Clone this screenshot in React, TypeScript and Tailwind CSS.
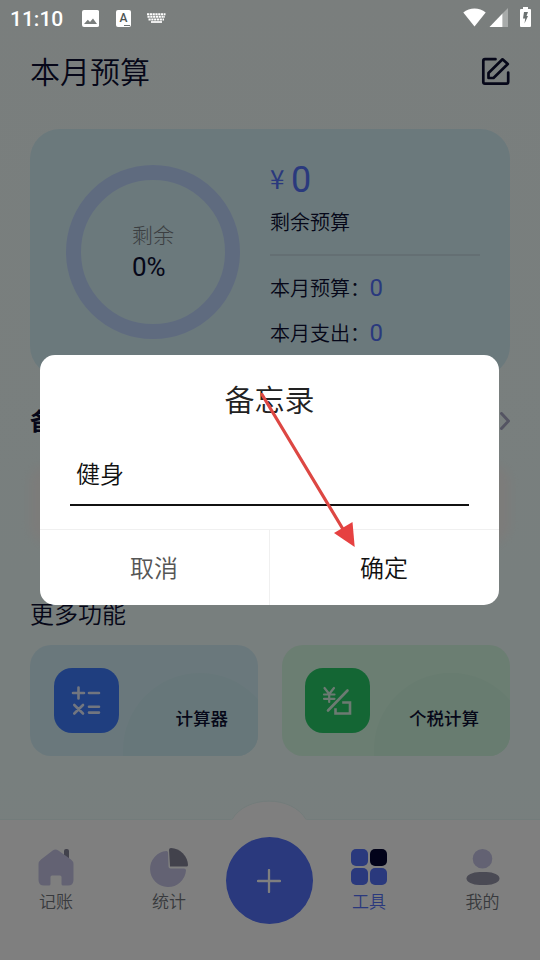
import React from "react";

const tools = [
    { label: '计算器', card: 'bg-[#d5f1f9]', blob: 'bg-[#cfeff4] -right-[19px] top-[28px]', tile: 'bg-[#3f7cff]', pad: 'pl-[24px] pr-[30px]', icon: 'calc' },
    { label: '个税计算', card: 'bg-[#d6fce4]', blob: 'bg-[#d0f8e0] -right-[18px] top-[28px]', tile: 'bg-[#28cc69]', pad: 'pl-[23px] pr-[31px]', icon: 'tax' },
];

function StatusBar() {
    return (
        <div className="absolute inset-x-0 top-0 z-20 flex h-9 items-center pl-[10px] pr-[9px] text-white">
            <span className="w-[53px] whitespace-nowrap pt-[2px] text-[21px] font-medium leading-none">11:10</span>
            <svg className="ml-[19px]" width="17" height="17" viewBox="0 0 17 17">
                <path fill="#fff" fillRule="evenodd" d="M2 0h13.200a2 2 0 0 1 2 2v13a2 2 0 0 1-2 2H2a2 2 0 0 1-2-2V2a2 2 0 0 1 2-2Zm0 14h13l-4-5.500-3 3.500-2.200-2.200Z" />
            </svg>
            <div className="relative ml-[17px] flex h-[17px] w-[15px] items-center justify-center rounded-[2px] bg-white pb-px text-[12px] font-medium leading-none text-[#4d5353]">
                A
                <span className="absolute bottom-[1px] right-[1px] w-[6px] border-b border-dashed border-[#6b7171]" />
            </div>
            <svg className="ml-[16px]" width="19" height="11" viewBox="0 0 19 11">
                <g stroke="#fff" strokeWidth="2" strokeDasharray="2.200 0.600">
                    <path d="M0 1.200H18.500" />
                    <path d="M0.500 3.800H18" />
                    <path d="M1.500 6.400H17" />
                </g>
                <path d="M4 9H15" stroke="#fff" strokeWidth="1.700" />
            </svg>
            <div className="ml-auto flex items-center">
                <svg className="-mt-[2px]" width="23" height="19" viewBox="0 0 23 19">
                    <path fill="#fff" d="M0.300 4.500C6.500-0.700 16.500-0.700 22.700 4.500L11.500 18.500Z" />
                </svg>
                <svg className="-mt-[1px] ml-[3px]" width="19" height="19" viewBox="0 0 19 19">
                    <path fill="#fff" fillOpacity="0.350" d="M13.500 5.500 19 0V19H13.500Z" />
                    <path fill="#fff" d="M0.500 19 13.500 5.500V19Z" />
                </svg>
                <svg className="-mt-[2px] ml-[12px]" width="11" height="20" viewBox="0 0 11 20">
                    <path fill="#fff" d="M3 0H8V2H10a1 1 0 0 1 1 1V19a1 1 0 0 1-1 1H1a1 1 0 0 1-1-1V3a1 1 0 0 1 1-1H3Z" />
                    <path fill="#6b7171" d="M4 5H8L6.500 9H8L4.500 16.500 5.200 11.500H3Z" />
                </svg>
            </div>
        </div>
    );
}

function BudgetCard() {
    return (
        <section className="flex h-[247px] rounded-[30px] bg-[#d6f2f9]">
            <div className="ml-[36px] mt-[36px] h-[174px] w-[174px] rounded-full border-[15px] border-[#bfd6ff] pl-[51px] pt-[43px]">
                <p className="text-[21px] font-light leading-[26px] text-[#787e83]">剩余</p>
                <p className="mt-[2px] text-[26px] font-normal leading-[32px] text-[#0c0f32]">0%</p>
            </div>
            <div className="ml-[30px] w-[210px] pt-[30px] text-[#0c0f32]">
                <div className="flex h-[42px] items-center font-normal text-[#5472fb]">
                    <span className="-mt-[5px] w-[21px] font-['Noto_Sans_CJK_SC',sans-serif] text-[26px]">¥</span>
                    <span className="-mt-px text-[36px]">0</span>
                </div>
                <p className="mt-[9px] text-[20px] leading-[26px]">剩余预算</p>
                <div className="mt-[18px] h-[2px] bg-[#c9dfe6]" />
                <div className="mt-[18px] flex h-[30px] items-center text-[20px]">
                    <span className="w-[99.500px] whitespace-nowrap">本月预算：</span>
                    <span className="-mt-[3px] text-[24px] font-normal text-[#5472fb]">0</span>
                </div>
                <div className="mt-[15px] flex h-[30px] items-center text-[20px]">
                    <span className="w-[99.500px] whitespace-nowrap">本月支出：</span>
                    <span className="-mt-[3px] text-[24px] font-normal text-[#5472fb]">0</span>
                </div>
            </div>
        </section>
    );
}

function ToolIcon({ name }: { name: string }) {
    if (name === 'calc') {
        return (
            <svg width="65" height="65" viewBox="0.500 0 65 65" fill="none" stroke="#e4edff" strokeWidth="2.600" strokeLinecap="round">
                <path d="M25 19.500V30.500M19.500 25H30.500M35.500 25H45.500" />
                <path d="M20.800 37 29.500 45.500M29.500 37 20.800 45.500M35.500 38.800H45.500M35.500 44.600H45.500" />
            </svg>
        );
    }
    return (
        <svg width="65" height="65" viewBox="0 0 65 65" fill="none" stroke="#d9f5e4" strokeWidth="2.600" strokeLinecap="round" strokeLinejoin="round">
            <path d="M19.500 20 24.200 26 29 20M24.200 26V34M19 26.500H29.500M19 30.800H29.500" strokeWidth="2.200" />
            <path d="M42.500 22.500 23 42.500" />
            <path d="M38.500 34.500H45V45.500H30.500V41.500" strokeLinecap="square" strokeLinejoin="miter" />
        </svg>
    );
}

function TabBar() {
    return (
        <nav className="relative h-[141px] border-t border-[#e6f8f6] bg-white">
            <svg className="absolute -top-[20px] left-[222px]" width="94" height="22" viewBox="0 0 94 22">
                <path d="M0 22 10 19.500C24-5 70-5 84 19.500L94 22Z" fill="#fff" />
                <path d="M10 19.500C24-5 70-5 84 19.500" fill="none" stroke="#e6f8f6" />
            </svg>
            <div className="relative flex text-center text-[17px] leading-[24px] text-[#70747b]">
                <a className="flex w-[112px] flex-col items-center pt-[28px] font-[350]">
                    <svg width="38" height="40" viewBox="0 0 38 40">
                        <rect x="27" y="1" width="5" height="12" rx="2" fill="#858599" />
                        <path fill="#c6c5e6" d="M15.700 2.500Q18.500 0.500 21.300 2.500L34 11.500Q36.500 13.500 36.500 16V32Q36.500 37.500 31 37.500H26Q24.500 37.500 24.500 36V29Q24.500 27.500 23 27.500H15Q13.500 27.500 13.500 29V36Q13.500 37.500 12 37.500H7Q1.500 37.500 1.500 32V16Q1.500 13.500 4 11.500Z" />
                    </svg>
                    <span className="mt-[2px]">记账</span>
                </a>
                <a className="flex w-[114px] flex-col items-center pt-[28px] font-[350]">
                    <svg width="38" height="40" viewBox="0 0 38 40">
                        <path fill="#c6c5e6" d="M16.500 3A18 18 0 1 0 36 22.500Q36 20.500 34 20.500H20.500Q18.500 20.500 18.500 18.500L18 4.500Q18 3 16.500 3Z" />
                        <path fill="#858599" d="M19 2Q19 0 21 0A18 18 0 0 1 38 17Q38 18.500 36.500 18.500H20Z" />
                    </svg>
                    <span className="mt-[2px]">统计</span>
                </a>
                <a className="flex w-[86px] justify-center pt-[17px]">
                    <span className="flex h-[87px] w-[87px] shrink-0 items-center justify-center rounded-full bg-[#5472fb]">
                        <svg width="24" height="24" viewBox="0 0 24 24" stroke="#fff" strokeWidth="2.300" strokeLinecap="round">
                            <path d="M12 1V23M1 12H23" />
                        </svg>
                    </span>
                </a>
                <a className="flex w-[114px] flex-col items-center pt-[29px] font-[350] text-[#5472fb]">
                    <svg width="36" height="36" viewBox="0 0 36 36" fill="#5472fb">
                        <rect width="17" height="17" rx="5" />
                        <rect x="19" width="17" height="17" rx="5" fill="#050734" />
                        <rect y="19" width="17" height="17" rx="5" />
                        <rect x="19" y="19" width="17" height="17" rx="5" />
                    </svg>
                    <span className="mt-[5px]">工具</span>
                </a>
                <a className="flex w-[113px] flex-col items-center pt-[29px] font-[350]">
                    <svg width="34" height="36" viewBox="0 0 34 36">
                        <circle cx="16.500" cy="9.800" r="9.800" fill="#c6c5e6" />
                        <rect x="0.500" y="23" width="33" height="13" rx="13" ry="6.500" fill="#9595a8" />
                    </svg>
                    <span className="mt-[5px]">我的</span>
                </a>
            </div>
        </nav>
    );
}

function MemoDialog() {
    return (
        <div className="absolute inset-0 z-10 bg-black/50 pl-[40px] pt-[355px]">
            <div className="flex h-[250px] w-[459px] flex-col rounded-[15px] bg-white">
                <h2 className="pt-[26px] text-center text-[30px] font-[350] leading-[40px] text-[#222]">备忘录</h2>
                <div className="mx-[30px] mt-[35px] h-[50px] border-b-2 border-[#111] pl-[6px] pt-px text-[24px] font-[350] leading-[36px] text-[#111]">健身</div>
                <div className="mt-auto flex h-[76px] border-t border-[#f0f0f0] text-[24px] font-[350] leading-[79px]">
                    <button className="w-[230px] border-r border-[#f0f0f0] pr-px text-[#555]">取消</button>
                    <button className="flex-1 pr-px text-[#111]">确定</button>
                </div>
            </div>
            <svg className="pointer-events-none absolute left-0 top-0" width="540" height="960" viewBox="0 0 540 960">
                <path d="M262 394.500 343.500 530" stroke="#dd4743" strokeWidth="3.200" strokeLinecap="round" />
                <path d="M354.700 547 334 533 352.500 522Z" fill="#e64141" />
            </svg>
        </div>
    );
}

export default function App() {
    return (
        <div className="relative flex h-[960px] w-[540px] flex-col overflow-hidden bg-gradient-to-b from-[#f4fdfb] to-[#effffd] font-['Roboto','Noto_Sans_CJK_SC',sans-serif]" lang="zh-CN">
            <StatusBar />
            <main className="flex-1 px-[30px] font-[350] text-[#0c0f32]">
                <header className="flex h-[129px] items-start justify-between pt-[51px]">
                    <h1 className="text-[30px] leading-[44px]">本月预算</h1>
                    <svg className="mt-[6px]" width="29" height="29" viewBox="0 0 29 29" fill="none" stroke="#0c0f32" strokeWidth="2.700" strokeLinecap="round" strokeLinejoin="round">
                        <path d="M14.500 2.200H4Q2.300 2.200 2.300 4V25Q2.300 26.700 4 26.700H25.500Q27.200 26.700 27.200 25V15.500" />
                        <path d="M7.500 20.500V16L21.500 2.300 26.800 7 12.500 21H7.500Z" />
                    </svg>
                </header>
                <BudgetCard />
                <div className="mt-[28px] flex h-[36px] items-center justify-between">
                    <h2 className="text-[24px] font-bold">备忘录</h2>
                    <svg className="-mt-[3px]" width="10" height="18" viewBox="0 0 10 18" fill="none" stroke="#a9a9c4" strokeWidth="3" strokeLinecap="round">
                        <path d="M1.500 1.500 8.500 9 1.500 16.500" />
                    </svg>
                </div>
                <div className="mt-[24px] h-[80px] rounded-[20px] bg-[#f8f8f5] blur-[4px]" />
                <h2 className="mt-[53px] text-[24px] leading-[36px]">更多功能</h2>
                <div className="mt-[12px] -mr-px flex gap-[24px]">
                    {tools.map((tool) => (
                        <div key={tool.label} className={`relative flex h-[111px] w-[228px] shrink-0 overflow-hidden rounded-[21px] pt-[23px] ${tool.card} ${tool.pad}`}>
                            <div className={`absolute h-[160px] w-[154px] rounded-full ${tool.blob}`} />
                            <div className={`relative h-[65px] w-[65px] shrink-0 rounded-[18px] ${tool.tile}`}>
                                <ToolIcon name={tool.icon} />
                            </div>
                            <span className="relative ml-auto mt-[38px] text-[17.500px] font-medium leading-[26px]">{tool.label}</span>
                        </div>
                    ))}
                </div>
            </main>
            <TabBar />
            <MemoDialog />
        </div>
    );
}
